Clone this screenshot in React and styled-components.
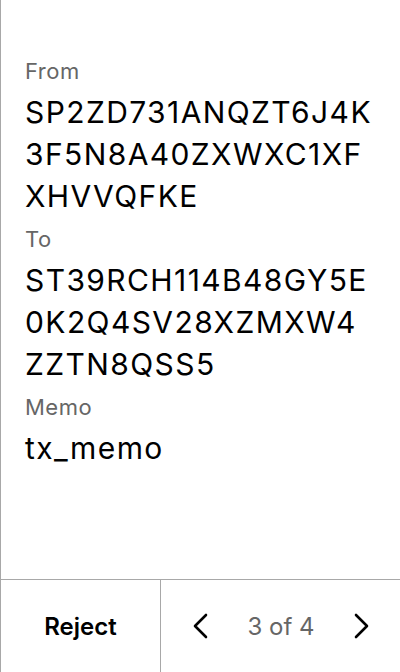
import React from 'react';
import styled, { createGlobalStyle } from 'styled-components';

const GlobalStyle = createGlobalStyle`
  html, body {
    margin: 0;
    padding: 0;
    background: #fff;
  }
  body {
    font-family: Inter, "Liberation Sans", sans-serif;
    -webkit-font-smoothing: antialiased;
  }
`;

const Screen = styled.div`
  width: 400px;
  height: 672px;
  box-sizing: border-box;
  border-left: 1px solid #a8a8a8;
  display: flex;
  flex-direction: column;
  background: #fff;
`;

const Content = styled.div`
  flex: 1;
  padding: 57px 26px 0 24px;
`;

const Field = styled.div`
  margin-bottom: 8px;
`;

const Label = styled.div`
  font-size: 22px;
  line-height: 28px;
  letter-spacing: 0.5px;
  color: #666;
  margin-bottom: 6px;
`;

const Value = styled.div`
  font-size: 30px;
  line-height: 42px;
  letter-spacing: 1.4px;
  color: #000;
  word-break: break-all;
`;

const Footer = styled.div`
  height: 92px;
  border-top: 1px solid #a8a8a8;
  display: flex;
`;

const RejectButton = styled.button`
  width: 160px;
  border: none;
  border-right: 1px solid #a8a8a8;
  background: transparent;
  font-family: inherit;
  font-size: 24px;
  font-weight: 600;
  color: #000;
  padding: 0;
  cursor: pointer;
`;

const Pager = styled.div`
  flex: 1;
  display: flex;
  align-items: center;
  justify-content: space-between;
  padding: 0 28px 0 29px;
`;

const Arrow = styled.button`
  border: none;
  background: transparent;
  padding: 0;
  display: flex;
  cursor: pointer;
`;

const PageText = styled.span`
  font-size: 24px;
  color: #666;
`;

const Chevron = ({ dir }) => (
  <svg width="20" height="28" viewBox="0 0 20 28" fill="none">
    <path
      d={dir === 'left' ? 'M16 3 L5 14 L16 25' : 'M4 3 L15 14 L4 25'}
      stroke="#000"
      strokeWidth="2.6"
      strokeLinecap="round"
      strokeLinejoin="round"
    />
  </svg>
);

const fields = [
  { label: 'From', value: 'SP2ZD731ANQZT6J4K3F5N8A40ZXWXC1XFXHVVQFKE' },
  { label: 'To', value: 'ST39RCH114B48GY5E0K2Q4SV28XZMXW4ZZTN8QSS5' },
  { label: 'Memo', value: 'tx_memo' },
];

export default function App() {
  return (
    <>
      <GlobalStyle />
      <Screen>
        <Content>
          {fields.map((f) => (
            <Field key={f.label}>
              <Label>{f.label}</Label>
              <Value>{f.value}</Value>
            </Field>
          ))}
        </Content>
        <Footer>
          <RejectButton type="button">Reject</RejectButton>
          <Pager>
            <Arrow type="button">
              <Chevron dir="left" />
            </Arrow>
            <PageText>3 of 4</PageText>
            <Arrow type="button">
              <Chevron dir="right" />
            </Arrow>
          </Pager>
        </Footer>
      </Screen>
    </>
  );
}
